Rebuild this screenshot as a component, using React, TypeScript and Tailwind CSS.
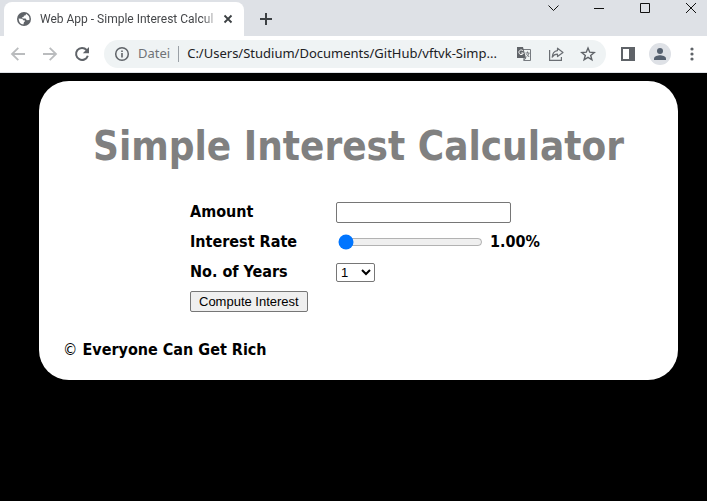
import { useState } from "react";
import type { ReactNode } from "react";

function IconButton({ label, className = "", children }: { label: string; className?: string; children: ReactNode }) {
  return (
    <button type="button" aria-label={label} className={`flex shrink-0 items-center justify-center ${className}`}>
      {children}
    </button>
  );
}

function TabStrip() {
  return (
    <div className="flex h-9 items-start bg-[#dee1e6] pl-1">
      <div className="mt-[2px] flex h-[34px] w-[240px] items-center rounded-t-lg bg-white pr-2 pl-3">
        <svg className="mr-2 size-4 shrink-0" viewBox="0 0 16 16" aria-hidden="true">
          <circle cx="8" cy="8" r="7" fill="#5f6368" />
          <path
            d="M2.6 7.5 5.5 7.8Q7 8 7.2 9.3L9 9.5Q9.2 10.5 8 11L7.4 13.6Q3 13.3 2.6 7.5ZM10 2.8 9.7 4.2 7.8 4.8 7.6 6 5.8 6.4 6.6 7.5 9.6 7.4 10.8 9.2 13.4 9.1Q14 4.8 10 2.8Z"
            fill="#fff"
          />
        </svg>
        <span className="min-w-0 flex-1 mask-r-from-[90%] font-[Roboto,sans-serif] text-[12px] leading-4 whitespace-nowrap text-[#45474a]">
          Web App - Simple Interest Calcul
        </span>
        <IconButton label="Close tab" className="size-4">
          <svg width="16" height="16" viewBox="0 0 16 16" stroke="#3c4043" strokeWidth="1.8" fill="none">
            <path d="m4.5 4.5 7 7m0-7-7 7" />
          </svg>
        </IconButton>
      </div>
      <IconButton label="New tab" className="mt-[11px] ml-[14px] size-4">
        <svg width="16" height="16" viewBox="0 0 16 16" stroke="#3c4043" strokeWidth="2" fill="none">
          <path d="M8 2v12M2 8h12" />
        </svg>
      </IconButton>
      <div className="ml-auto flex gap-[30px] pr-2">
        <IconButton label="Search tabs" className="size-4">
          <svg width="16" height="16" viewBox="0 0 16 16" stroke="#111" fill="none">
            <path d="m3.5 5.5 5 5 5-5" />
          </svg>
        </IconButton>
        <IconButton label="Minimize" className="size-4">
          <svg width="16" height="16" viewBox="0 0 16 16" stroke="#111" fill="none">
            <path d="M3 8.5h10" />
          </svg>
        </IconButton>
        <IconButton label="Maximize" className="size-4">
          <svg width="16" height="16" viewBox="0 0 16 16" stroke="#111" fill="none">
            <path d="M3.5 3.5h9v9h-9z" />
          </svg>
        </IconButton>
        <IconButton label="Close window" className="size-4">
          <svg width="16" height="16" viewBox="0 0 16 16" stroke="#111" fill="none">
            <path d="m3 3 10 10M13 3 3 13" />
          </svg>
        </IconButton>
      </div>
    </div>
  );
}

function Toolbar() {
  const [url, setUrl] = useState("C:/Users/Studium/Documents/GitHub/vftvk-Simp...");
  return (
    <div className="flex h-[37px] items-center border-b border-[#dee1e6] bg-white pl-[10px]">
      <div className="flex gap-4">
        <IconButton label="Back" className="size-4">
          <svg width="16" height="16" viewBox="0 0 16 16" stroke="#babcbe" strokeWidth="1.8" fill="none">
            <path d="M15 8H2.5M8.3 1.8 2 8l6.3 6.2" />
          </svg>
        </IconButton>
        <IconButton label="Forward" className="size-4">
          <svg width="16" height="16" viewBox="0 0 16 16" stroke="#babcbe" strokeWidth="1.8" fill="none">
            <path d="M1 8h12.5M7.7 1.8 14 8l-6.3 6.2" />
          </svg>
        </IconButton>
        <IconButton label="Reload" className="size-4">
          <svg width="16" height="16" viewBox="0 0 16 16" fill="none">
            <path d="M12.6 4A6 6 0 1 0 13.8 9.7" stroke="#5f6368" strokeWidth="2" />
            <path d="M15 1v6.2H8.8z" fill="#5f6368" />
          </svg>
        </IconButton>
      </div>
      <div className="ml-[14px] flex h-7 min-w-0 flex-1 items-center rounded-full bg-[#eff3f4] px-[10px] font-['Noto_Sans',sans-serif] text-[13px]">
        <svg className="size-4 shrink-0" viewBox="0 0 16 16" fill="none" aria-hidden="true">
          <circle cx="8" cy="8" r="6.3" stroke="#5f6368" strokeWidth="1.5" />
          <path d="M8 7v4.5M8 4.4V6" stroke="#5f6368" strokeWidth="1.6" />
        </svg>
        <span className="ml-2 text-[#6f7377]">Datei</span>
        <span className="mx-2 h-4 w-px shrink-0 bg-[#9aa0a6]" />
        <input
          aria-label="Address"
          value={url}
          onChange={(e) => setUrl(e.target.value)}
          className="min-w-0 flex-1 bg-transparent text-[#202124] outline-none"
        />
        <div className="ml-2 flex gap-4">
          <IconButton label="Translate" className="size-4">
            <svg width="16" height="16" viewBox="0 0 16 16" fill="none">
              <path d="M7 3.5h7.5v11H8" stroke="#777b80" />
              <path d="M1 1h6l3 11H1z" fill="#5f6368" />
              <path d="M7.2 5.1A2.3 2.3 0 1 0 7.4 7H5.3" stroke="#fff" />
              <path d="M9.5 7h4M11.5 5.5V7m1.5 0c-.3 1.8-1.4 3-2.6 4m0-3 2.8 3M8 12l-.3 2.5L10 12z" stroke="#777b80" />
            </svg>
          </IconButton>
          <IconButton label="Share" className="size-4">
            <svg width="16" height="16" viewBox="0 0 16 16" stroke="#6a6e73" strokeWidth="1.2" fill="none">
              <path d="M1.6 4v10.4h11.8V11" />
              <path d="M9.5 2.2 15 6.4l-5.5 4.2V8.2C7.2 8.2 5.4 9 4.2 11.2 4.4 7.5 6.5 5 9.5 4.6z" strokeLinejoin="round" />
            </svg>
          </IconButton>
          <IconButton label="Bookmark" className="size-4">
            <svg width="16" height="16" viewBox="0 0 16 16" stroke="#5f6368" strokeWidth="1.4" fill="none">
              <path d="m8 2 1.7 4.2 4.5.3-3.5 2.9 1.2 4.4L8 11.4l-3.9 2.4 1.2-4.4L1.8 6.5l4.5-.3z" />
            </svg>
          </IconButton>
        </div>
      </div>
      <IconButton label="Side panel" className="ml-[14px] size-4">
        <svg width="16" height="16" viewBox="0 0 16 16">
          <path d="M1 1h14v14H1zM3 3v10h6V3z" fill="#5f6368" fillRule="evenodd" />
        </svg>
      </IconButton>
      <IconButton label="Profile" className="ml-[13px] size-[22px] rounded-full bg-[#dee1e6]">
        <svg width="14" height="14" viewBox="0 0 14 14" fill="#55606f">
          <circle cx="7" cy="4" r="3" />
          <path d="M1 13v-1.5C1 9 5 8.2 7 8.2s6 .8 6 3.3V13z" />
        </svg>
      </IconButton>
      <IconButton label="Menu" className="mr-[7px] ml-[13px] size-4">
        <svg width="16" height="16" viewBox="0 0 16 16" fill="#5f6368">
          <circle cx="8" cy="3" r="1.6" />
          <circle cx="8" cy="8" r="1.6" />
          <circle cx="8" cy="13" r="1.6" />
        </svg>
      </IconButton>
    </div>
  );
}

function Calculator() {
  const [amount, setAmount] = useState("");
  const [rate, setRate] = useState(1);
  const [years, setYears] = useState(1);
  return (
    <main className="mt-2 mr-[29px] ml-[39px] rounded-[30px] bg-white px-6 pt-[35px] pb-[18px] font-['DejaVu_Sans_Condensed','Noto_Sans',sans-serif] text-[16px] leading-6 font-bold text-black">
      <h1 className="text-center text-[40px] leading-[60px] whitespace-nowrap text-[#808080]">Simple Interest Calculator</h1>
      <form className="mt-6 ml-[127px]" onSubmit={(e) => e.preventDefault()}>
        <div className="grid grid-cols-[146px_1fr] items-center gap-y-[6px]">
          <label htmlFor="amount">Amount</label>
          <input
            id="amount"
            type="number"
            value={amount}
            onChange={(e) => setAmount(e.target.value)}
            className="h-[21px] w-[175px] rounded-[2px] border border-[#767676] bg-white px-1 font-['Liberation_Sans',sans-serif] text-[13px] font-normal"
          />
          <label htmlFor="rate">Interest Rate</label>
          <div className="flex items-center">
            <input
              id="rate"
              type="range"
              min={1}
              max={20}
              step={0.25}
              value={rate}
              onChange={(e) => setRate(Number(e.target.value))}
              className="mx-[2px] h-4 w-[145px] accent-[#0075ff]"
            />
            <output htmlFor="rate" className="ml-[5px]">{rate.toFixed(2)}%</output>
          </div>
          <label htmlFor="years">No. of Years</label>
          <select
            id="years"
            value={years}
            onChange={(e) => setYears(Number(e.target.value))}
            className="h-[19px] w-[39px] rounded-[2px] border border-[#767676] bg-white font-['Liberation_Sans',sans-serif] text-[13px] leading-4 font-normal"
          >
            {[1, 2, 3, 4, 5, 6, 7, 8, 9, 10].map((n) => (
              <option key={n}>{n}</option>
            ))}
          </select>
        </div>
        <button
          type="submit"
          className="mt-[7px] block h-[21px] rounded-[2px] border border-[#767676] bg-[#efefef] px-2 font-['Liberation_Sans',sans-serif] text-[13px] leading-4 font-normal"
        >
          Compute Interest
        </button>
      </form>
      <footer className="mt-[26px]">
        <span className="font-normal">©</span> Everyone Can Get Rich
      </footer>
    </main>
  );
}

export default function App() {
  return (
    <div className="min-h-screen bg-black font-['Open_Sans',sans-serif]">
      <TabStrip />
      <Toolbar />
      <Calculator />
    </div>
  );
}
